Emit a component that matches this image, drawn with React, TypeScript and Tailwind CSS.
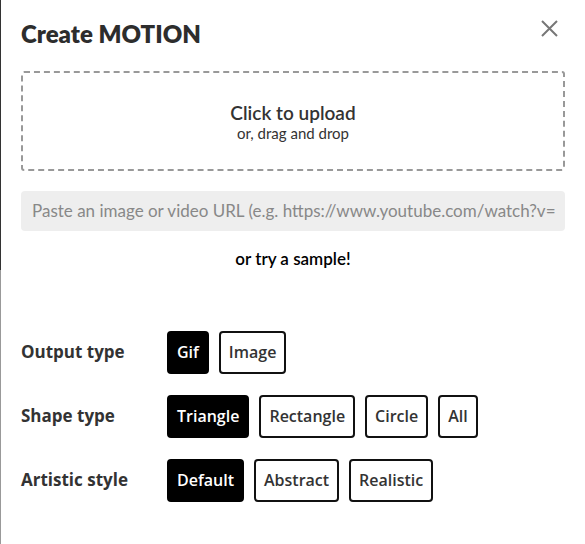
import React from "react";

const raleway = { fontFamily: "Lato, 'Open Sans', sans-serif" };

function Btn({ label, active }: { label: string; active?: boolean }) {
  return (
    <button
      className={
        active
          ? "h-[43px] px-[8px] rounded-[4px] border-2 border-black bg-black text-white text-[16px] font-semibold font-['Open_Sans',sans-serif]"
          : "h-[43px] px-[8px] rounded-[4px] border-2 border-[#111] bg-white text-[#333] text-[16px] font-semibold font-['Open_Sans',sans-serif]"
      }
    >
      {label}
    </button>
  );
}

function Row({ label, items }: { label: string; items: { l: string; a?: boolean }[] }) {
  return (
    <div className="flex items-center h-[43px]">
      <div className="w-[146px] text-[17px] font-bold text-[#333] font-['Open_Sans',sans-serif]">{label}</div>
      <div className="flex gap-[10px]">
        {items.map((i) => (
          <Btn key={i.l} label={i.l} active={i.a} />
        ))}
      </div>
    </div>
  );
}

export default function App() {
  return (
    <div className="w-[585px] h-[544px] bg-white flex overflow-hidden">
      <div className="w-px shrink-0 flex flex-col">
        <div className="h-[270px] bg-[#333]" />
        <div className="flex-1 bg-[#999]" />
      </div>
      <div className="flex-1 min-w-0 pl-[20px] pr-[20px] pt-[18px]">
        <div className="flex items-start justify-between">
          <h1 className="text-[24px] font-extrabold text-[#2d2d2d] leading-[32px]" style={raleway}>
            Create MOTION
          </h1>
          <svg width="17" height="17" viewBox="0 0 17 17" className="mt-[2px] mr-[7px]">
            <path d="M1 1L16 16M16 1L1 16" stroke="#777" strokeWidth="2" />
          </svg>
        </div>
        <div className="mt-[21px] h-[100px] border-2 border-dashed border-[#999] rounded-[3px] flex flex-col items-center justify-center">
          <div className="text-[19px] font-semibold text-[#333] leading-[23px]" style={raleway}>
            Click to upload
          </div>
          <div className="text-[15px] text-[#333] leading-[18px]" style={raleway}>
            or, drag and drop
          </div>
        </div>
        <div className="mt-[20px] h-[40px] min-w-0 bg-[#eee] rounded-[4px] px-[11px] flex items-center overflow-hidden">
          <span className="text-[17px] text-[#888] whitespace-nowrap" style={raleway}>
            Paste an image or video URL (e.g. https://www.youtube.com/watch?v=
          </span>
        </div>
        <div className="mt-[15px] text-center text-[17px] font-semibold text-black" style={raleway}>
          or try a sample!
        </div>
        <div className="mt-[59px] flex flex-col gap-[21px]">
          <Row label="Output type" items={[{ l: "Gif", a: true }, { l: "Image" }]} />
          <Row
            label="Shape type"
            items={[{ l: "Triangle", a: true }, { l: "Rectangle" }, { l: "Circle" }, { l: "All" }]}
          />
          <Row label="Artistic style" items={[{ l: "Default", a: true }, { l: "Abstract" }, { l: "Realistic" }]} />
        </div>
      </div>
    </div>
  );
}
